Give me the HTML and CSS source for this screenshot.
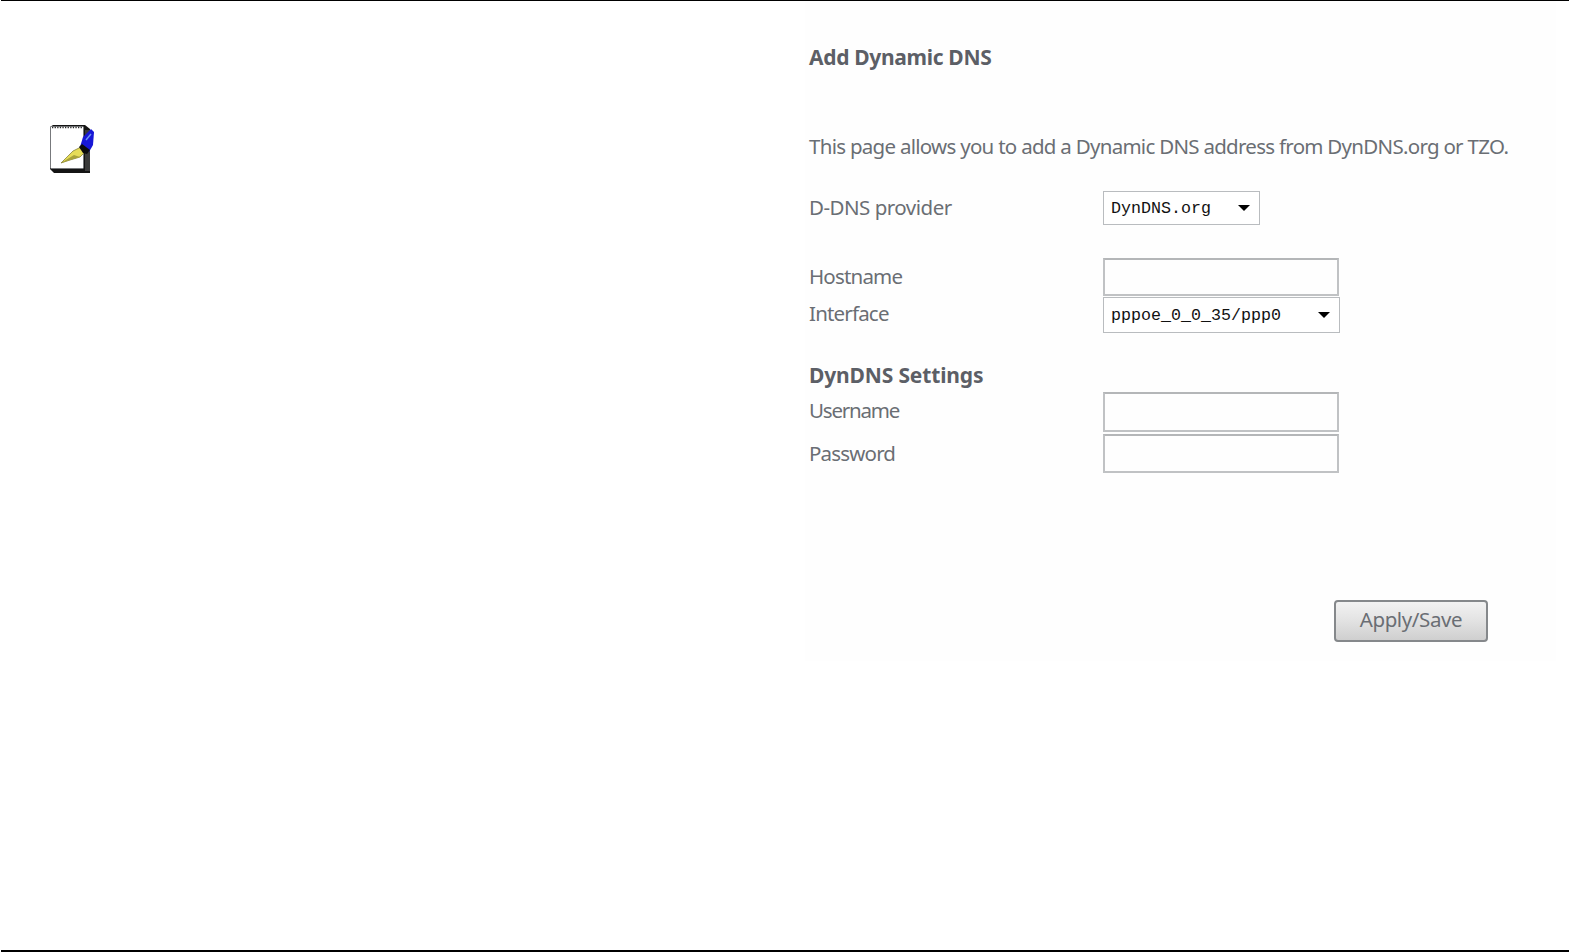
FILE: index.html
```html
<!DOCTYPE html>
<html lang="en">
<head>
<meta charset="utf-8">
<title>Add Dynamic DNS</title>
<link rel="stylesheet" href="styles.css">
</head>
<body>
<div class="page">
  <aside class="note">
    <svg class="note-icon" width="46" height="50" viewBox="0 0 46 50" aria-hidden="true">
      <path d="M4 1H36L41 5V49H5L1 45V3Z" fill="#141414"/>
      <path d="M36 6H41V47H36Z" fill="#3a3a3a"/>
      <rect x="1.5" y="2.5" width="33" height="42" rx="1" fill="#fff" stroke="#77797c" stroke-width="1"/>
      <path d="M3 3.5H34" stroke="#2a2a2a" stroke-width="1.6" stroke-dasharray="1.3 1.3"/>
      <path d="M12 39L24 27L32 23L36 28L31 33L21 36Z" fill="#e6dc58" stroke="#77722a" stroke-width=".7"/>
      <path d="M12 39L25 31L31 33L21 36Z" fill="#a8a23a"/>
      <path d="M31 23L34 13L42 5L45 8L44 21L40 28L35 27Z" fill="#1717d6"/>
      <path d="M30 23L33 20L41 26L38 30L34 29Z" fill="#0b0b0b"/>
      <path d="M37 16L42 10" stroke="#6f96f2" stroke-width="1.4"/>
    </svg>
  </aside>
  <main class="panel">
    <h1 class="title">Add Dynamic DNS</h1>
    <p class="intro">This page allows you to add a Dynamic DNS address from DynDNS.org or TZO.</p>
    <div class="row row-provider">
      <label class="label label-wide">D-DNS provider</label>
      <span class="select select-short"><span>DynDNS.org</span><i class="caret"></i></span>
    </div>
    <div class="row row-host">
      <label class="label">Hostname</label>
      <input class="field field-tall" type="text">
    </div>
    <div class="row row-iface">
      <label class="label label-high">Interface</label>
      <span class="select select-long"><span>pppoe_0_0_35/ppp0</span><i class="caret"></i></span>
    </div>
    <h2 class="subtitle">DynDNS Settings</h2>
    <div class="row row-user">
      <label class="label label-user">Username</label>
      <input class="field field-user" type="text">
    </div>
    <div class="row row-pass">
      <label class="label">Password</label>
      <input class="field field-pass" type="password">
    </div>
    <div class="actions">
      <button class="button" type="button">Apply/Save</button>
    </div>
  </main>
</div>
</body>
</html>
```
FILE: styles.css
```css
* { box-sizing: border-box; }
html, body { margin: 0; height: 100%; background: #fff; overflow: hidden; }
.page {
  height: 952px;
  margin-left: 1px;
  border-top: 1px solid #000;
  border-bottom: 2px solid #000;
  display: flex;
  font-family: "Noto Sans", "Liberation Sans", sans-serif;
  color: #6a6e74;
}
.note { width: 804px; padding: 123px 0 0 48px; flex: none; }
.note-icon { display: block; }
.panel {
  width: 751px;
  height: 660px;
  background: #fefefe;
  padding: 0 0 0 4px;
  display: flex;
  flex-direction: column;
  align-items: flex-start;
}
.title, .subtitle { margin: 0; font-size: 21px; line-height: 28px; font-weight: 700; color: #5c5f66; }
.title { margin-top: 42px; letter-spacing: -.32px; }
.intro { margin: 61px 0 0; font-size: 20.5px; line-height: 28px; letter-spacing: -.72px; white-space: nowrap; }
.row { display: flex; align-items: center; }
.label { width: 294px; flex: none; padding-bottom: 2px; font-size: 20.5px; line-height: 28px; letter-spacing: -.82px; }
.label-wide { letter-spacing: -.5px; }
.label-high { padding-bottom: 5px; }
.label-user { padding-bottom: 4px; letter-spacing: -1.2px; }
.row-provider { margin-top: 31px; }
.row-host { margin-top: 33px; }
.row-iface { margin-top: 1px; }
.row-user { margin-top: 3px; }
.row-pass { margin-top: 2px; }
.select {
  display: flex;
  align-items: center;
  justify-content: space-between;
  background: #fff;
  border: 1px solid #b9bcbf;
  padding: 0 8px 0 7px;
  font-family: "Liberation Mono", monospace;
  font-size: 16.67px;
  color: #111;
}
.select-short { width: 157px; height: 34px; }
.select-long { width: 237px; height: 36px; }
.caret { width: 0; height: 0; border-left: 6px solid transparent; border-right: 6px solid transparent; border-top: 6px solid #000; margin-right: 1px; }
.field { display: block; width: 236px; padding: 0; background: #fefefe; border: 2px solid #c0c2c4; border-top-color: #b4b6b8; }
.field-tall { height: 38px; }
.field-user { height: 40px; }
.field-pass { height: 39px; }
.subtitle { margin-top: 28px; letter-spacing: -.15px; }
.actions { align-self: flex-end; margin: 127px 68px 0 0; }
.button {
  display: block;
  width: 154px;
  height: 42px;
  padding: 0 0 4px;
  border: 2px solid #85888b;
  border-radius: 4px;
  background: linear-gradient(#f2f2f2, #e4e4e4 45%, #cfcfcf);
  font-family: inherit;
  font-size: 20.5px;
  letter-spacing: -.38px;
  color: #6a6e74;
}
```
